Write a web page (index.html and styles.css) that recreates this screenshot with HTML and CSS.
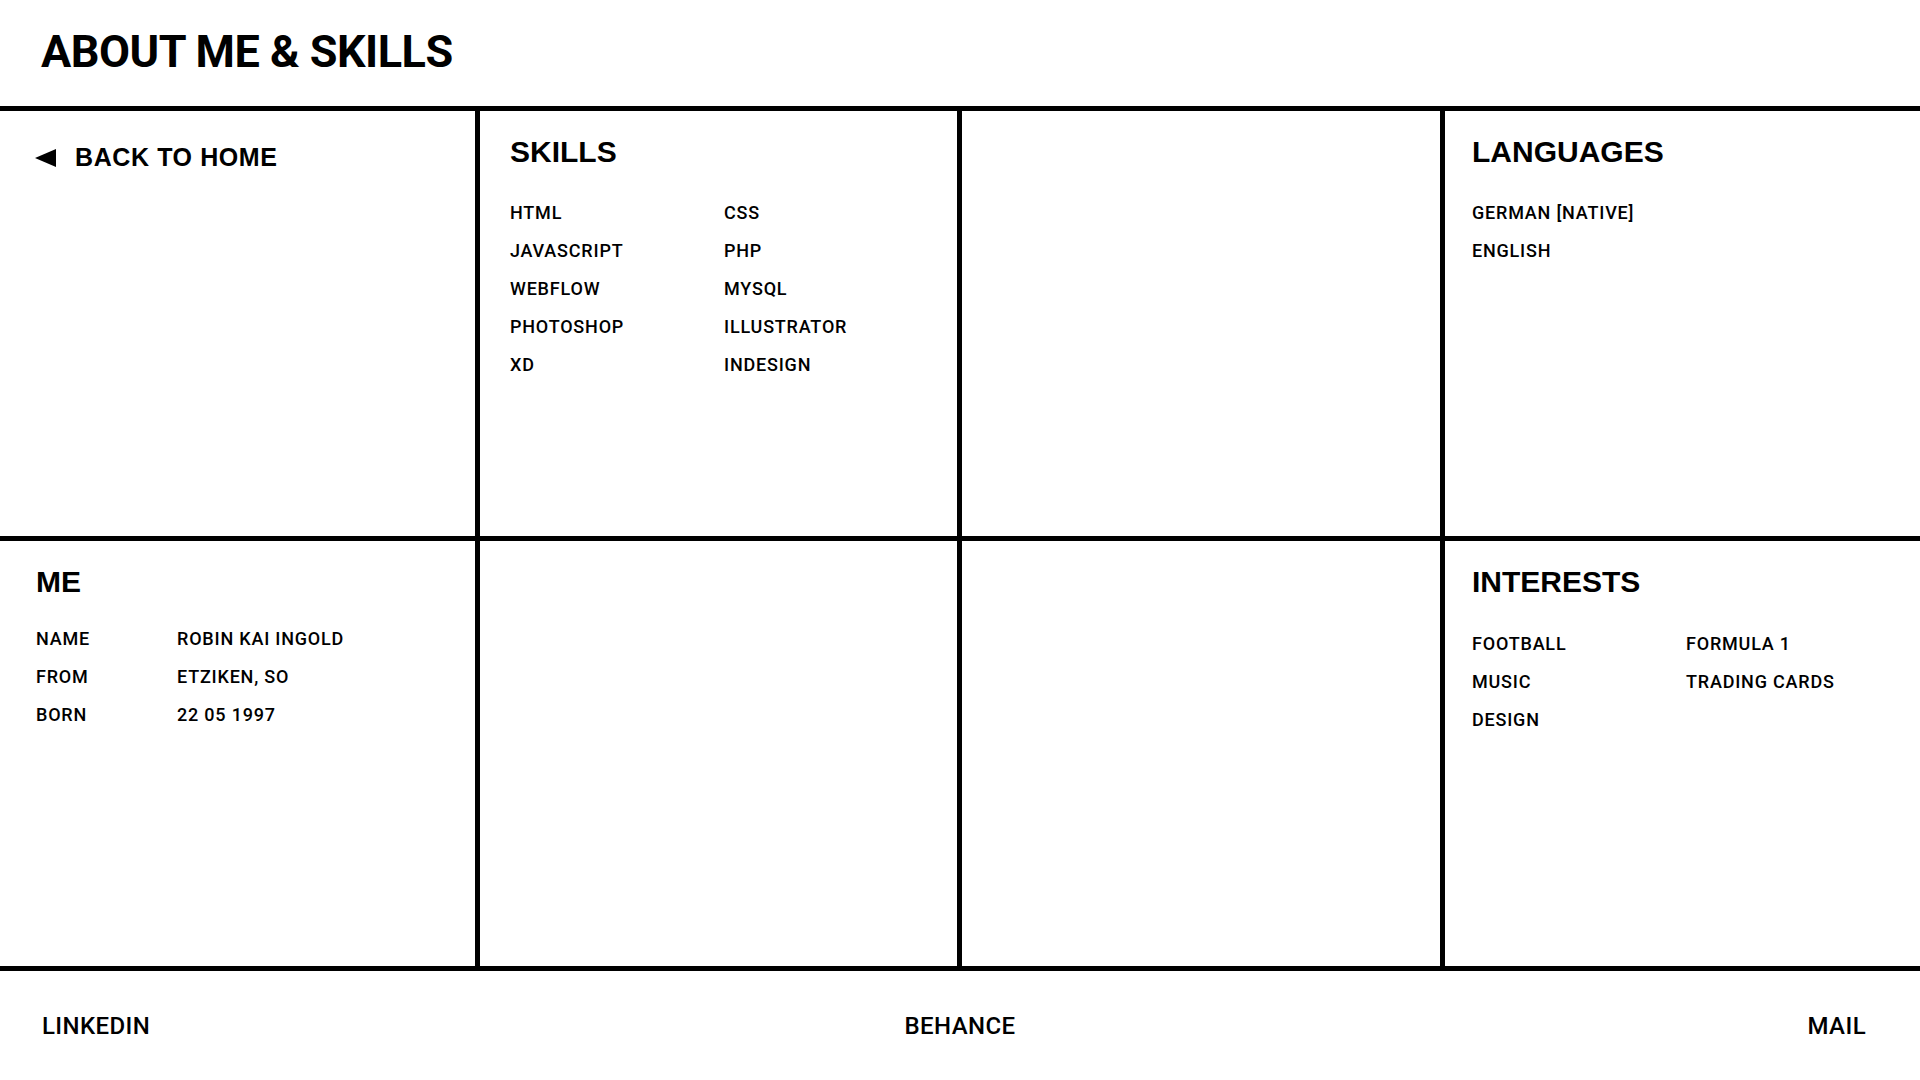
FILE: index.html
```html
<!DOCTYPE html>
<html lang="en">
<head>
    <meta charset="UTF-8">
    <meta name="viewport" content="width=device-width, initial-scale=1.0">
    <title>About me &amp; Skills</title>
    <link rel="stylesheet" href="styles.css">
</head>
<body>
    <header class="page-header">
        <h1>ABOUT ME &amp; SKILLS</h1>
    </header>

    <main class="board">
        <div class="cell cell-first">
            <a class="back-link" href="#">
                <svg class="back-arrow" width="21" height="18" viewBox="0 0 21 18"><polygon points="21,0 21,18 0,9" fill="#000"/></svg>
                <span>BACK TO HOME</span>
            </a>
        </div>

        <div class="cell">
            <h2>SKILLS</h2>
            <ul class="list two-cols">
                <li>HTML</li><li>CSS</li>
                <li>JAVASCRIPT</li><li>PHP</li>
                <li>WEBFLOW</li><li>MYSQL</li>
                <li>PHOTOSHOP</li><li>ILLUSTRATOR</li>
                <li>XD</li><li>INDESIGN</li>
            </ul>
        </div>

        <div class="cell"></div>

        <div class="cell cell-last">
            <h2>LANGUAGES</h2>
            <ul class="list">
                <li>GERMAN [NATIVE]</li>
                <li>ENGLISH</li>
            </ul>
        </div>

        <div class="cell cell-first">
            <h2>ME</h2>
            <dl class="facts">
                <dt>NAME</dt><dd>ROBIN KAI INGOLD</dd>
                <dt>FROM</dt><dd>ETZIKEN, SO</dd>
                <dt>BORN</dt><dd>22 05 1997</dd>
            </dl>
        </div>

        <div class="cell"></div>

        <div class="cell"></div>

        <div class="cell cell-last">
            <h2>INTERESTS</h2>
            <ul class="list two-cols interests">
                <li>FOOTBALL</li><li>FORMULA 1</li>
                <li>MUSIC</li><li>TRADING CARDS</li>
                <li>DESIGN</li>
            </ul>
        </div>
    </main>

    <footer class="page-footer">
        <a href="#">LINKEDIN</a>
        <a class="footer-middle" href="#">BEHANCE</a>
        <a class="footer-right" href="#">MAIL</a>
    </footer>
</body>
</html>
```

FILE: styles.css
```css
body {
    font-family: Roboto, "Liberation Sans", sans-serif;
    margin: 0;
    padding: 0;
    background-color: #fff;
    color: #000;
}

a {
    color: #000;
    text-decoration: none;
}

.page-header {
    height: 106px;
    box-sizing: border-box;
    padding: 29px 0 0 41px;
}

.page-header h1 {
    margin: 0;
    font-size: 45px;
    font-weight: 700;
    letter-spacing: -0.5px;
    line-height: 1;
}

.board {
    display: grid;
    grid-template-columns: 475px 477px 478px 475px;
    grid-template-rows: 425px 425px;
    gap: 5px;
    background-color: #000;
    border-top: 5px solid #000;
    border-bottom: 5px solid #000;
}

.cell {
    background-color: #fff;
    padding: 26px 30px 0 30px;
}

.cell-first {
    padding-left: 36px;
}

.cell-last {
    padding-left: 27px;
}

h2 {
    margin: 0;
    font-family: "Liberation Sans", Arial, sans-serif;
    font-size: 30px;
    font-weight: 700;
    line-height: 1;
}

.back-link {
    display: flex;
    align-items: center;
    gap: 19px;
    margin-top: 8px;
    margin-left: -1px;
    font-family: "Liberation Sans", Arial, sans-serif;
    font-size: 25px;
    font-weight: 700;
    letter-spacing: 0.6px;
    line-height: 1;
}

.list {
    list-style: none;
    margin: 27px 0 0 0;
    padding: 0;
    display: grid;
    grid-auto-rows: 38px;
}

.two-cols {
    grid-template-columns: 214px auto;
}

.interests {
    margin-top: 28px;
}

.list li,
.facts dt,
.facts dd {
    font-size: 18px;
    font-weight: 500;
    letter-spacing: 0.8px;
    line-height: 38px;
}

.facts {
    margin: 23px 0 0 0;
    display: grid;
    grid-template-columns: 141px auto;
    grid-auto-rows: 38px;
}

.facts dd {
    margin: 0;
}

.page-footer {
    height: 109px;
    display: grid;
    grid-template-columns: 1fr auto 1fr;
    align-items: center;
    padding: 0 54px 0 42px;
}

.page-footer a {
    font-size: 24px;
    font-weight: 500;
    letter-spacing: 0.4px;
    line-height: 1;
}

.footer-middle {
    margin-left: 12px;
}

.footer-right {
    justify-self: end;
}
```
